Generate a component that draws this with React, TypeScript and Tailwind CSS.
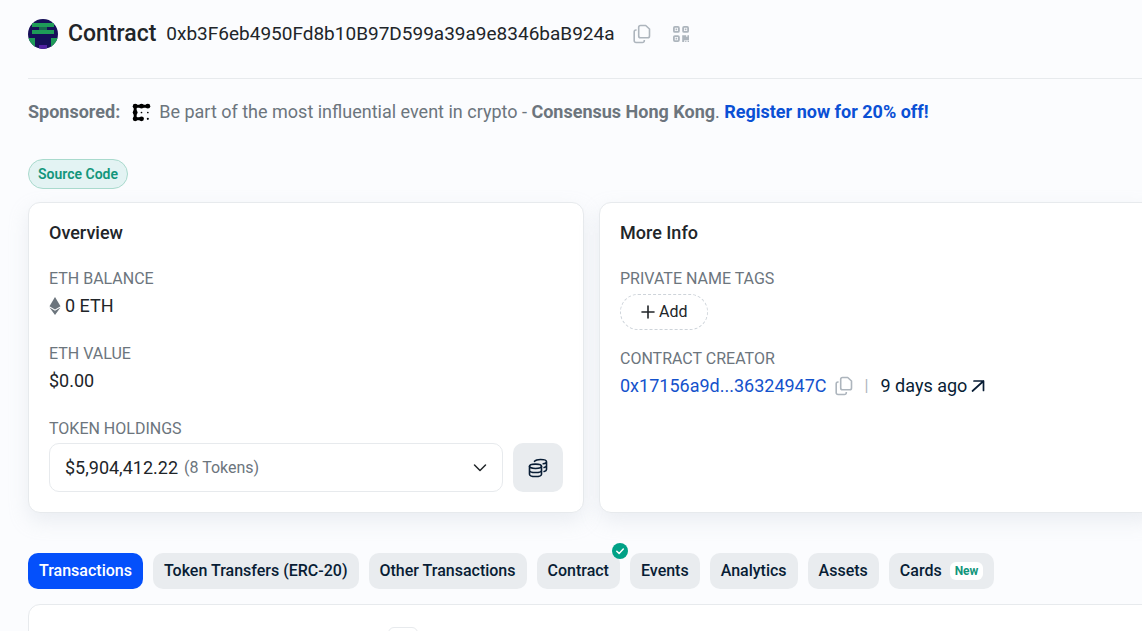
import { useState, type ReactNode } from 'react'

const tabs = [
  { id: 'transactions', label: 'Transactions' },
  { id: 'token-transfers', label: 'Token Transfers (ERC-20)' },
  { id: 'other', label: 'Other Transactions' },
  { id: 'contract', label: 'Contract', verified: true },
  { id: 'events', label: 'Events' },
  { id: 'analytics', label: 'Analytics' },
  { id: 'assets', label: 'Assets' },
  { id: 'cards', label: 'Cards', isNew: true },
]

export default function App() {
  const [active, setActive] = useState('transactions')

  return (
    <main className="flex h-screen flex-col overflow-hidden bg-[#fbfcfe] pl-7 font-['Roboto',sans-serif] text-lg text-[#212529]">
      <header className="flex h-[79px] shrink-0 items-center border-b border-[#e7eaed] pb-[11px]">
        <Identicon />
        <h1 className="ml-2.5 text-[23px] font-medium">Contract</h1>
        <span className="ml-2.5 text-[19px]">0xb3F6eb4950Fd8b10B97D599a39a9e8346baB924a</span>
        <button type="button" aria-label="Copy address" className="ml-[18px] text-[#adb5bd]">
          <CopyIcon />
        </button>
        <button type="button" aria-label="Show QR code" className="ml-[22px] text-[#adb5bd]">
          <QrIcon />
        </button>
      </header>

      <p className="mt-[19px] flex items-center whitespace-pre text-[#6c757d]">
        <b className="mr-3">Sponsored:</b>
        <ConsensusLogo />
        <span className="ml-2">
          Be part of the most influential event in crypto - <b>Consensus Hong Kong</b>.{' '}
          <a href="#register" className="font-bold text-[#0a50d5]">Register now for 20% off!</a>
        </span>
      </p>

      <div className="mt-[33px] flex">
        <a
          href="#code"
          className="flex h-[30px] items-center rounded-full border border-[#a9dacd] bg-[#e3f3f3] px-[9px] text-sm font-semibold text-[#12967b]"
        >
          Source Code
        </a>
      </div>

      <div className="-mr-[13px] mt-[13px] flex gap-[15px]">
        <Card title="Overview">
          <Field label="ETH Balance">
            <span className="flex items-center gap-1">
              <EthIcon />0 ETH
            </span>
          </Field>
          <div className="mt-[21px]">
            <Field label="ETH Value">$0.00</Field>
          </div>
          <div className="mt-[21px]">
            <Field label="Token Holdings">
              <div className="mt-px flex gap-2.5">
                <button
                  type="button"
                  aria-haspopup="listbox"
                  className="flex h-[49px] flex-1 items-center rounded-[10px] border border-[#e7eaed] px-[15px]"
                >
                  $5,904,412.22
                  <span className="ml-1.5 text-base text-[#6c757d]">(8 Tokens)</span>
                  <svg viewBox="0 0 14 14" className="ml-auto size-3.5" fill="none" stroke="currentColor" strokeWidth="1.5" strokeLinecap="round" strokeLinejoin="round">
                    <path d="M1.500 4l5.500 5.500L12.500 4" />
                  </svg>
                </button>
                <button
                  type="button"
                  aria-label="View token holdings"
                  className="flex h-[49px] w-[50px] items-center justify-center rounded-[10px] bg-[#e9ecef] text-[#081d35]"
                >
                  <CoinsIcon />
                </button>
              </div>
            </Field>
          </div>
        </Card>

        <Card title="More Info">
          <Field label="Private Name Tags">
            <button
              type="button"
              className="mt-0.5 flex h-9 items-center gap-1 rounded-full border border-dashed border-[#ced4da] px-5 text-base"
            >
              <svg viewBox="0 0 14 14" className="size-3.5" stroke="currentColor" strokeWidth="1.6" strokeLinecap="round">
                <path d="M7 1v12M1 7h12" />
              </svg>
              Add
            </button>
          </Field>
          <div className="mt-4">
            <Field label="Contract Creator">
              <span className="flex items-center">
                <a href="#creator" className="text-[#1452cc]">0x17156a9d...36324947C</a>
                <button type="button" aria-label="Copy creator address" className="ml-2 text-[#adb5bd]">
                  <CopyIcon />
                </button>
                <span className="mx-3 text-base text-[#adb5bd]">|</span>
                <a href="#creation" className="flex items-center gap-1 text-[#081d35]">
                  9 days ago
                  <svg viewBox="0 0 14 14" className="size-3.5" fill="none" stroke="currentColor" strokeWidth="1.7" strokeLinecap="round" strokeLinejoin="round">
                    <path d="M3 2h9.500v9.500M12.500 2L1.500 12" />
                  </svg>
                </a>
              </span>
            </Field>
          </div>
        </Card>
      </div>

      <div role="tablist" className="mt-10 flex gap-2.5">
        {tabs.map(tab => (
          <button
            key={tab.id}
            type="button"
            role="tab"
            aria-selected={active === tab.id}
            onClick={() => setActive(tab.id)}
            className={`relative flex h-9 items-center rounded-[10px] px-[11px] text-base font-medium whitespace-nowrap ${
              active === tab.id ? 'bg-[#0450fb] text-white' : 'bg-[#e9ecef] text-[#081d35]'
            }`}
          >
            {tab.label}
            {tab.isNew && (
              <span className="ml-2 rounded-md bg-white px-[5px] text-xs leading-[18px] font-bold text-[#12967b]">New</span>
            )}
            {tab.verified && (
              <svg viewBox="0 0 16 16" className="absolute -top-2.5 -right-2 size-4">
                <circle cx="8" cy="8" r="8" fill="#00a186" />
                <path d="M4.800 8.200l2.300 2.200 4.200-4.300" fill="none" stroke="#fff" strokeWidth="1.5" strokeLinecap="round" strokeLinejoin="round" />
              </svg>
            )}
          </button>
        ))}
      </div>

      <section className="-mr-[13px] mt-[15px] h-24 shrink-0 rounded-t-xl border border-[#e7eaed] bg-white pt-[22px] pl-[359px]">
        <button type="button" aria-label="Filter" className="block h-8 w-[30px] rounded-md border border-[#e7eaed]" />
      </section>
    </main>
  )
}

function Card({ title, children }: { title: string; children: ReactNode }) {
  return (
    <section className="min-h-[311px] flex-1 rounded-xl border border-[#e7eaed] bg-white px-5 pt-4 pb-5 shadow-[0_8px_19px_rgba(189,197,209,0.25)]">
      <h2 className="mb-[19px] font-medium">{title}</h2>
      {children}
    </section>
  )
}

function Field({ label, children }: { label: string; children: ReactNode }) {
  return (
    <div>
      <h3 className="text-base leading-[26px] text-[#6c757d] uppercase">{label}</h3>
      {children}
    </div>
  )
}

function Identicon() {
  return (
    <svg viewBox="0 0 30 30" className="size-[30px] shrink-0">
      <defs>
        <clipPath id="avatar">
          <circle cx="15" cy="15" r="15" />
        </clipPath>
      </defs>
      <g clipPath="url(#avatar)">
        <path fill="#160f58" d="M0 0h30v30H0z" />
        <path fill="#1e9b58" d="M4 4h22v4H4zM4 11h22v4H4zM0 19h7v11H0zM23 19h7v11h-7z" />
        <path fill="#17694f" d="M11 8h8v3h-8z" />
        <path fill="#5222a3" d="M11 26h8v4h-8z" />
      </g>
    </svg>
  )
}

function CopyIcon() {
  return (
    <svg viewBox="0 0 18 20" className="h-5 w-[18px]" fill="none" stroke="currentColor" strokeWidth="1.6" strokeLinejoin="round">
      <path d="M7.500 1.500h5.200L16.500 5v7a1.800 1.800 0 0 1-1.800 1.800H7.500A1.800 1.800 0 0 1 5.700 12V3.300A1.800 1.800 0 0 1 7.500 1.500z" />
      <path d="M3.600 6H3a1.800 1.800 0 0 0-1.800 1.800v8.900A1.800 1.800 0 0 0 3 18.500h6.500a1.800 1.800 0 0 0 1.800-1.800v-.6" />
    </svg>
  )
}

function QrIcon() {
  return (
    <svg viewBox="0 0 16 16" className="size-4" fill="none" stroke="currentColor" strokeWidth="1.8">
      <rect x=".9" y=".9" width="5" height="5" rx="1" />
      <rect x="10.100" y=".9" width="5" height="5" rx="1" />
      <rect x=".9" y="10.100" width="5" height="5" rx="1" />
      <path fill="currentColor" stroke="none" d="M2.600 2.600h1.600v1.600H2.600zM11.800 2.600h1.600v1.600h-1.600zM2.600 11.800h1.600v1.600H2.600zM9.200 9.200h4v1.600h1.200V9.200H16v5h-4.800V16h-2zM12.200 14.800h1.200V16h-1.200zM14.600 14.800H16V16h-1.400z" />
    </svg>
  )
}

function ConsensusLogo() {
  const dots = [[3, 3], [9, 3], [15, 3], [3, 9], [3, 15], [9, 15]]
  return (
    <svg viewBox="0 0 18 18" className="size-[19px]">
      {dots.map(([x, y]) => (
        <circle key={`${x}-${y}`} cx={x} cy={y} r="2.300" />
      ))}
      <path d="M15 3H3v12h6" fill="none" stroke="#000" strokeWidth="2.800" />
      <circle cx="9" cy="9" r=".8" />
      <circle cx="15" cy="9" r=".8" />
      <circle cx="15" cy="15" r="1" />
    </svg>
  )
}

function EthIcon() {
  return (
    <svg viewBox="0 0 12 18" className="h-[18px] w-3" fill="#6c757d">
      <path d="M6 0l5.500 9.200L6 12.400.5 9.200z" />
      <path d="M.5 10.600L6 13.800l5.500-3.200L6 18z" />
    </svg>
  )
}

function CoinsIcon() {
  return (
    <svg viewBox="0 0 20 20" className="size-5" fill="none" stroke="currentColor" strokeWidth="1.600" strokeLinecap="round">
      <ellipse cx="7.500" cy="8.300" rx="6" ry="2.200" />
      <path d="M1.500 8.300v7.900c0 1.300 2.700 2.300 6 2.300s6-1 6-2.300V8.300M1.500 12.200c0 1.300 2.700 2.300 6 2.300s6-1 6-2.300" />
      <path d="M6.500 3.300c.9-1.100 3.200-1.800 6-1.800 3.300 0 6 1 6 2.200 0 1-1.300 1.800-3.300 2.100M18.500 3.700v7.800c0 .9-.9 1.600-2.400 2M18.500 7.600c0 .9-.9 1.600-2.400 2" />
    </svg>
  )
}
